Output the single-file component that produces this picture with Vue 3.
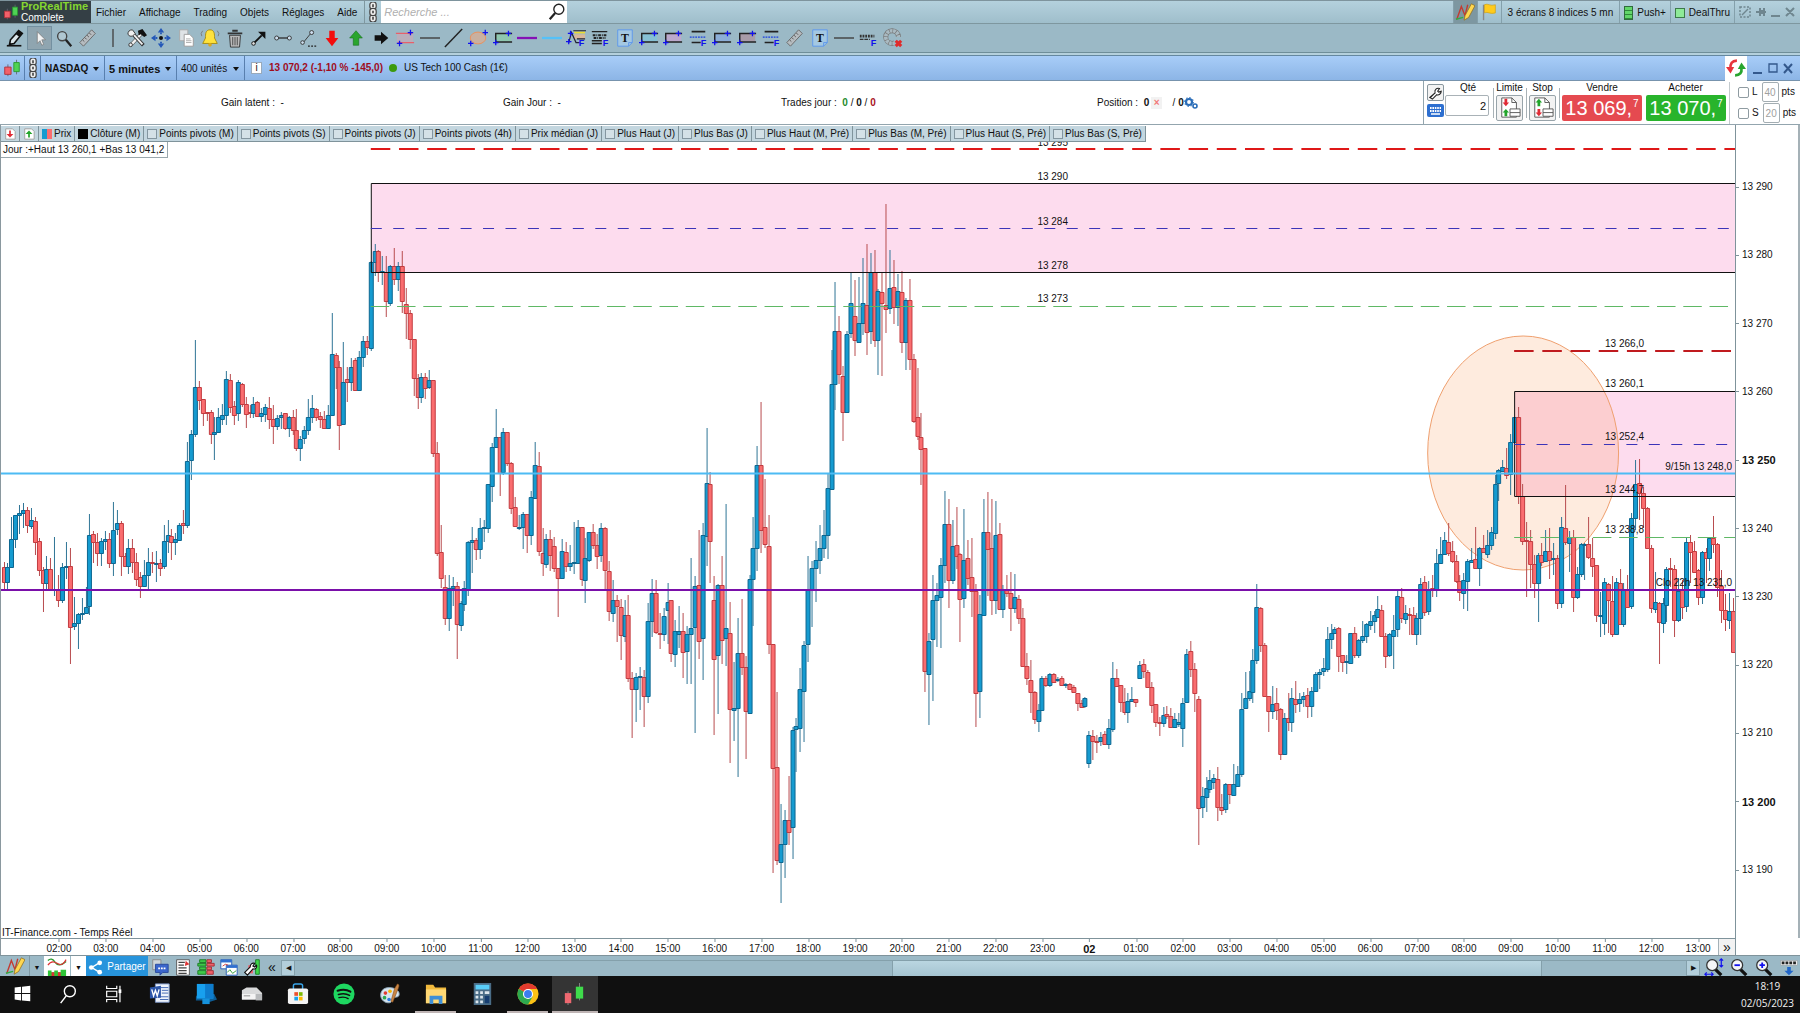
<template>
  <div class="desktop">
    <header class="menubar">
      <div class="brand">
        <svg class="ico" viewBox="0 0 22 22" v-html="icons.candles"></svg>
        <div><strong>ProRealTime</strong><span>Complete</span></div>
      </div>
      <nav class="menu">
        <a v-for="m in menus" :key="m" href="#">{{ m }}</a>
      </nav>
      <button class="chain" aria-label="Lier"><svg class="ico" viewBox="0 0 22 22" v-html="icons.chain"></svg></button>
      <div class="search">
        <input type="text" placeholder="Recherche ..." aria-label="Recherche">
        <svg class="ico" viewBox="0 0 22 22" v-html="icons.search"></svg>
      </div>
      <div class="menubar-right">
        <button class="cell active" aria-label="Dessin"><svg class="ico" viewBox="0 0 22 22" v-html="icons.draw"></svg></button>
        <button class="cell" aria-label="Drapeau"><svg class="ico" viewBox="0 0 22 22" v-html="icons.flag"></svg></button>
        <button class="cell wide">3 écrans 8 indices 5 mn</button>
        <button class="cell"><i class="push"></i>Push+</button>
        <button class="cell"><i class="deal"></i>DealThru</button>
        <button class="cell win dim" aria-label="Fenêtre"><svg viewBox="0 0 64 22" v-html="icons.winDim"></svg></button>
      </div>
    </header>

    <div class="toolbar">
      <div class="tools">
        <button v-for="(t, i) in tools" :key="i" :class="{ active: t === 'cursor' }" :aria-label="t">
          <svg class="ico" viewBox="0 0 22 22" v-html="icons[t]"></svg>
        </button>
      </div>
    </div>
    <div class="strip"></div>

    <div class="titlebar">
      <span class="tcell first"><svg class="ico" viewBox="0 0 22 22" v-html="icons.candles"></svg></span>
      <span class="tcell link"><svg class="ico" viewBox="0 0 22 22" v-html="icons.chain"></svg></span>
      <label class="tcell drop nasdaq"><select aria-label="Valeur"><option>NASDAQ</option></select></label>
      <label class="tcell drop minutes"><select aria-label="Unité de temps"><option>5 minutes</option></select></label>
      <label class="tcell drop units"><select aria-label="Historique"><option>400 unités</option></select></label>
      <span class="info">i</span>
      <strong class="quote">13 070,2 (-1,10 % -145,0)</strong>
      <i class="dot"></i>
      <span>US Tech 100 Cash (1€)</span>
      <span class="sync"><svg class="ico" viewBox="0 0 22 22" v-html="icons.sync"></svg></span>
      <button class="win" aria-label="Fenêtre"><svg viewBox="0 0 64 22" v-html="icons.win"></svg></button>
    </div>

    <section class="account">
      <div class="stats">
        <span>Gain latent :&nbsp; -</span>
        <span>Gain Jour :&nbsp; -</span>
        <span>Trades jour :&nbsp; <b class="green">0</b> / <b>0</b> / <b class="red">0</b></span>
        <span>Position :&nbsp; <b>0</b> <i class="cross">×</i> &nbsp; / <b>0</b><svg class="gears" viewBox="0 0 14 12" v-html="icons.gears"></svg></span>
      </div>
      <div class="order">
        <div class="side">
          <button aria-label="Réglages"><svg viewBox="0 0 17 17" v-html="icons.wrench"></svg></button>
          <button class="kb" aria-label="Clavier"><svg viewBox="0 0 17 13" v-html="icons.keyboard"></svg></button>
        </div>
        <div class="field">
          <label for="qty">Qté</label>
          <input id="qty" type="text" value="2">
        </div>
        <div class="field sep">
          <label for="limit">Limite</label>
          <button id="limit" class="doc"><svg viewBox="0 0 24 24" v-html="icons.limit"></svg></button>
        </div>
        <div class="field sep">
          <label for="stop">Stop</label>
          <button id="stop" class="doc"><svg viewBox="0 0 24 24" v-html="icons.stop"></svg></button>
        </div>
        <div class="field sep">
          <label for="sell">Vendre</label>
          <button id="sell" class="deal-btn sell">13 069,<sup>7</sup></button>
        </div>
        <div class="field">
          <label for="buy">Acheter</label>
          <button id="buy" class="deal-btn buy">13 070,<sup>7</sup></button>
        </div>
        <div class="auto">
          <div><label><input type="checkbox">L</label><label><input type="text" value="40">pts</label></div>
          <div><label><input type="checkbox">S</label><label><input type="text" value="20">pts</label></div>
        </div>
      </div>
    </section>

    <main class="chart">
      <div class="plot">
        <svg class="drawing" viewBox="1 125 1735 813" preserveAspectRatio="none">
          <rect x="371.5" y="183.5" width="1370" height="89" class="zone" />
          <rect x="1515.5" y="391.5" width="230" height="105" class="zone" />
          <ellipse cx="1524" cy="453" rx="95.5" ry="117" class="halo" />
          <g v-for="(c, i) in candles" :key="i" :class="c.up ? 'up' : 'down'">
            <path :d="`M${c.x} ${c.high}V${c.low}`" />
            <rect :x="c.x - 2" :y="c.top" width="4" :height="c.size" />
          </g>
          <rect x="371.5" y="183.5" width="1370" height="89" class="frame" />
          <rect x="1515.5" y="391.5" width="230" height="105" class="frame" />
          <path d="M371 149H1736" class="dash-red" />
          <path d="M371 228.500H1732" class="dash-blue" />
          <path d="M371 306.500H1732" class="dash-green" />
          <path d="M1515 351H1732" class="dash-red dark" />
          <path d="M1515 444.500H1732" class="dash-blue" />
          <path d="M1515 537.500H1736" class="dash-green" />
          <path d="M1 473.500H1736" class="open-line" />
          <path d="M1 590H1736" class="close-line" />
        </svg>
        <span v-for="l in levels" :key="l.text" class="level" :class="{ end: l.end }" :style="levelStyle(l)">{{ l.text }}</span>
        <div class="legend">
          <button aria-label="Réduire"><svg viewBox="0 0 14 14" v-html="icons.redDown"></svg></button>
          <button aria-label="Agrandir"><svg viewBox="0 0 14 14" v-html="icons.greenUp"></svg></button>
          <span class="item"><i class="duo"></i>Prix</span>
          <span class="item"><i class="black"></i>Clôture (M)</span>
          <label v-for="n in indicators" :key="n" class="item"><input type="checkbox">{{ n }}</label>
        </div>
        <div class="range">Jour :+Haut 13 260,1 +Bas 13 041,2</div>
        <div class="source">IT-Finance.com - Temps Réel</div>
      </div>
      <div class="prices">
        <span v-for="p in prices" :key="p.text" :class="{ bold: p.bold }" :style="{ top: p.top }">{{ p.text }}</span>
      </div>
    </main>

    <div class="times">
      <div class="times-inner">
        <span v-for="(t, i) in times" :key="i" :class="{ bold: t === '02' }" :style="{ left: timeLeft(i) }">{{ t }}</span>
        <button class="more">»</button>
      </div>
    </div>

    <footer class="bottombar">
      <button class="b-draw" aria-label="Dessin"><svg class="ico" viewBox="0 0 22 22" v-html="icons.draw"></svg></button>
      <button class="b-arrow">▼</button>
      <button class="b-chart" aria-label="Indicateurs"><svg class="ico" viewBox="0 0 22 22" v-html="icons.waves"></svg></button>
      <button class="b-arrow white">▼</button>
      <button class="share"><svg viewBox="0 0 16 16" v-html="icons.share"></svg>Partager</button>
      <button v-for="b in bottomTools" :key="b" class="b-tool" :aria-label="b"><svg class="ico" viewBox="0 0 22 22" v-html="icons[b]"></svg></button>
      <button class="b-fold">«</button>
      <button class="b-scroll">◀</button>
      <div class="track"><div class="thumb"></div></div>
      <button class="b-scroll">▶</button>
      <div class="zooms">
        <button v-for="b in zoomTools" :key="b" :aria-label="b"><svg class="ico" viewBox="0 0 22 22" v-html="icons[b]"></svg></button>
      </div>
    </footer>

    <div class="taskbar">
      <button v-for="a in apps" :key="a" :class="{ open: a === 'explorer' || a === 'chrome', current: a === 'candlesApp' }" :aria-label="a">
        <svg viewBox="0 0 24 24" v-html="icons[a]"></svg>
      </button>
      <div class="clock"><span>18:19</span><span>02/05/2023</span></div>
    </div>
  </div>
</template>

<script setup>
const menus = ['Fichier', 'Affichage', 'Trading', 'Objets', 'Réglages', 'Aide']

const tools = [
  'pen', 'cursor', 'lookup', 'ruler', 'bar', 'hammer', 'move', 'copy', 'bell', 'trash',
  'arrowNE', 'segment', 'halfLine', 'down', 'up', 'right', 'channel', 'hline', 'diag', 'oval',
  'rectGreen', 'violet', 'sky', 'fiboA', 'fiboB', 'text', 'rectSky', 'rectPink', 'fiboC', 'rectBlue',
  'rectMauve', 'fiboC', 'ruler', 'text', 'hline', 'fiboD', 'magnet'
]

const indicators = [
  'Points pivots (M)', 'Points pivots (S)', 'Points pivots (J)', 'Points pivots (4h)', 'Prix médian (J)',
  'Plus Haut (J)', 'Plus Bas (J)', 'Plus Haut (M, Pré)', 'Plus Bas (M, Pré)', 'Plus Haut (S, Pré)', 'Plus Bas (S, Pré)'
]

const bottomTools = ['chat', 'news', 'book', 'windows', 'wrenchCandle']
const zoomTools = ['zoomFit', 'zoomOut', 'zoomIn', 'gridDown']
const apps = ['start', 'find', 'taskview', 'word', 'tablet', 'drive', 'store', 'spotify', 'paint', 'explorer', 'calc', 'chrome', 'candlesApp']

// open close high low, one group per 5 minute bar, in chart units
const data = `
567 582 562 589,582 567 563 589,567 539 517 568,539 515 515 548,515 513 505 534,513 510 503 528,510 525 507 533,526 520 508 529,521 542 517 555,541 570 538 576,570 583 567 612,583 569 556 590,
569 590 558 590,590 589 537 596,590 600 575 607,600 567 563 603,567 566 542 579,566 627 548 664,626 623 597 630,623 614 613 649,614 613 598 620,613 607 587 614,606 535 514 615,534 542 531 563,
542 553 533 566,553 541 538 566,541 539 531 550,539 563 533 568,563 530 502 576,529 523 510 535,523 556 521 576,556 566 553 567,566 548 539 574,548 562 539 573,562 579 553 586,577 586 572 598,
586 575 560 587,575 562 548 589,562 563 552 573,564 563 551 582,563 568 559 576,566 541 525 569,541 535 520 553,536 542 529 560,542 539 533 555,540 525 523 540,523 525 510 534,525 461 442 528,
460 434 430 480,434 387 340 437,387 400 381 410,399 413 399 426,412 413 412 421,412 434 410 444,434 432 417 460,432 417 408 432,419 415 404 425,415 379 371 425,380 407 374 413,406 415 401 425,
413 382 380 421,384 404 383 407,404 414 397 428,412 413 405 418,413 404 397 418,402 416 401 416,416 413 408 422,414 407 404 422,408 419 397 429,419 426 405 444,426 418 415 430,417 415 412 429,
413 428 413 430,428 417 416 437,417 430 410 435,430 448 409 451,448 439 436 461,438 430 426 444,430 417 399 435,417 408 395 423,409 417 408 421,416 419 412 428,419 428 411 428,428 415 405 429,
415 354 313 416,355 367 353 389,367 425 361 450,424 382 342 424,379 382 367 402,382 367 358 391,360 390 358 391,390 357 351 391,357 341 336 367,341 347 336 355,348 262 261 351,262 251 244 276,
251 272 250 282,272 271 256 285,272 301 256 317,303 266 265 306,266 279 248 285,279 266 262 291,266 301 251 313,304 313 288 339,313 339 310 349,339 378 339 396,378 397 374 409,397 377 373 403,
377 388 373 399,387 380 370 389,380 453 380 457,453 553 442 556,552 578 525 588,587 618 575 625,618 588 575 631,588 586 577 606,586 624 582 659,625 603 601 631,604 588 581 611,590 542 541 596,
542 540 527 573,540 549 538 560,549 528 518 559,528 527 520 542,528 484 484 533,486 447 443 502,447 437 409 448,437 473 437 496,472 432 428 475,432 463 432 466,463 508 462 514,507 526 497 527,
528 527 515 530,527 514 512 549,514 535 514 553,535 497 491 545,498 465 442 498,466 551 452 556,553 563 528 576,564 539 534 568,539 555 530 571,546 568 537 572,568 578 568 617,578 551 539 579,
552 566 542 572,566 563 545 571,563 562 522 574,563 527 520 564,527 579 527 586,580 558 538 603,560 532 532 562,532 545 524 549,545 556 534 569,555 528 523 562,528 570 527 590,571 611 561 621,
613 600 580 622,600 606 595 642,607 635 599 660,636 615 600 642,615 678 595 682,678 689 672 738,689 677 673 722,677 676 667 710,677 696 670 727,696 621 603 703,621 593 579 637,593 632 580 634,
633 634 613 649,634 616 608 641,610 602 583 644,600 653 600 662,654 631 620 667,634 631 606 648,631 652 613 678,651 634 626 684,634 628 558 684,627 586 576 733,585 641 530 659,638 535 523 680,
536 483 428 566,484 541 472 583,600 659 576 735,655 585 584 714,585 640 556 664,638 628 504 666,633 709 602 763,710 708 662 741,708 653 618 777,653 667 599 675,667 711 656 759,713 579 575 714,
579 548 517 626,548 465 446 571,465 530 402 553,527 544 479 548,546 644 515 654,644 768 644 873,767 860 692 865,862 844 804 903,844 820 810 878,820 832 776 845,827 730 727 859,729 726 718 772,
728 689 668 752,691 645 641 742,644 589 556 662,589 568 561 627,568 560 541 602,560 548 525 574,548 535 510 558,535 488 474 559,489 384 350 490,384 331 282 410,331 374 316 384,376 412 366 441,
412 334 331 413,333 303 273 338,316 340 280 356,342 323 277 343,323 303 258 335,305 332 244 355,331 272 253 344,272 340 250 347,340 291 289 375,292 303 272 376,305 309 204 333,308 288 250 314,
287 307 260 324,307 291 274 326,292 342 271 353,342 300 298 370,300 359 279 370,359 421 354 423,417 436 368 440,437 449 413 485,448 671 448 692,674 641 633 725,639 600 575 701,600 595 583 647,
597 565 558 648,565 524 491 583,524 580 499 608,580 546 520 584,545 556 507 569,554 599 553 642,598 560 509 608,558 578 540 585,577 591 538 617,591 693 584 727,691 614 595 718,615 532 499 616,
532 549 492 596,548 600 499 615,600 535 501 614,534 609 523 610,609 590 585 618,590 593 575 597,593 608 572 631,608 597 574 613,599 618 595 624,618 666 608 667,666 678 653 685,680 692 660 713,
692 719 691 724,721 710 704 732,710 678 676 711,678 685 676 687,685 674 673 687,674 682 673 682,680 679 677 682,678 685 676 686,685 684 683 688,684 689 683 690,687 692 685 693,693 703 693 711,
703 707 700 707,706 698 697 708,763 735 731 768,736 741 730 760,741 742 735 753,741 737 732 746,734 744 731 745,744 728 719 749,729 678 662 732,678 686 669 686,685 702 685 712,702 712 688 715,
712 701 693 723,701 699 687 701,699 702 699 707,678 665 661 679,664 671 659 678,672 687 670 688,687 705 682 713,704 722 704 727,722 723 717 736,723 715 707 727,714 716 706 719,716 727 708 727,
727 719 713 728,724 722 713 727,728 703 698 747,702 654 649 702,651 669 641 677,669 693 663 712,699 808 696 845,807 796 787 818,797 788 777 812,789 780 770 793,782 778 774 789,779 807 767 821,
807 810 794 815,809 784 783 813,784 794 784 804,795 784 764 795,786 774 766 787,774 709 693 777,708 698 672 709,698 691 671 701,692 660 649 703,660 607 584 664,608 645 607 652,645 696 643 697,
696 711 696 732,711 704 686 719,703 710 688 720,709 754 708 760,754 718 713 755,718 722 693 731,722 698 688 732,699 704 681 713,703 699 693 712,699 696 692 707,695 706 688 718,706 691 687 717,
691 674 672 692,674 672 669 689,671 668 658 676,669 639 627 672,639 633 624 649,633 629 627 634,628 656 627 672,655 662 655 672,662 661 655 674,663 633 633 664,633 655 627 658,655 640 639 658,
640 636 621 643,636 624 623 643,625 621 611 630,621 615 611 633,617 609 596 617,610 636 605 637,636 656 633 668,655 634 633 657,636 630 615 669,629 596 591 637,597 618 588 623,619 613 605 624,
614 615 608 635,615 634 607 635,634 618 613 645,618 584 578 635,582 612 576 616,611 589 581 615,588 589 575 597,589 563 549 597,563 554 537 564,554 540 532 555,542 553 523 556,551 561 541 563,
561 581 555 583,581 592 575 601,593 580 573 609,581 561 559 611,562 560 548 563,559 568 527 569,568 548 547 586,548 552 535 553,554 545 530 558,545 532 527 550,533 484 475 539,483 470 469 501,
471 467 460 471,468 475 448 479,474 442 434 495,442 417 417 443,417 496 407 504,496 541 484 545,540 541 522 597,541 564 530 588,564 583 555 598,583 555 553 622,555 562 543 566,561 551 530 562,
551 560 528 579,559 558 543 575,558 603 555 609,603 527 517 608,528 542 485 545,543 537 531 572,537 597 530 612,597 574 567 599,574 544 543 577,545 544 543 580,544 557 517 559,558 566 538 577,
565 615 565 622,616 615 592 637,623 582 578 635,584 600 583 633,601 634 576 637,634 582 578 634,583 624 569 625,624 590 583 627,590 607 575 607,606 518 513 609,518 484 460 530,483 493 459 520,
493 508 487 528,508 548 507 549,548 608 545 613,609 602 572 613,603 622 602 664,623 603 598 633,605 569 567 622,568 569 558 587,569 620 565 637,620 591 578 622,590 607 580 619,606 542 537 612,
542 552 535 583,551 572 541 573,570 597 569 605,597 552 551 604,552 558 548 583,558 538 537 571,538 544 516 553,544 587 543 597,586 610 570 623,610 619 594 631,620 611 593 629,611 652 598 653`

const candles = data.trim().split(',').map((row, i) => {
  const [open, close, high, low] = row.trim().split(' ').map(Number)
  return {
    x: Math.floor(4 + i * 3.906) + 0.5,
    high,
    low,
    top: Math.min(open, close) + 0.5,
    size: Math.max(Math.abs(open - close), 1),
    up: close < open
  }
})

const topOf = (y) => ((y - 125) / 813) * 100 + '%'

const levels = [
  { text: '13 295', x: 1038, y: 143 },
  { text: '13 290', x: 1038, y: 177 },
  { text: '13 284', x: 1038, y: 222 },
  { text: '13 278', x: 1038, y: 266 },
  { text: '13 273', x: 1038, y: 299 },
  { text: '13 266,0', x: 1606, y: 344 },
  { text: '13 260,1', x: 1606, y: 384 },
  { text: '13 252,4', x: 1606, y: 437 },
  { text: '9/15h 13 248,0', y: 467, end: true },
  { text: '13 244,7', x: 1606, y: 490 },
  { text: '13 238,8', x: 1606, y: 530 },
  { text: 'Clo 22h 13 231,0', y: 583, end: true }
]
const levelStyle = (l) => (l.end ? { top: topOf(l.y) } : { top: topOf(l.y), left: ((l.x - 1) / 1735) * 100 + '%' })

const prices = Array.from({ length: 11 }, (_, i) => {
  const value = 290 - i * 10
  return { text: '13 ' + value, top: topOf(187 + i * 68.3), bold: value % 50 === 0 }
})

const two = (n) => String(n).padStart(2, '0')
const times = [
  ...Array.from({ length: 22 }, (_, i) => two(i + 2) + ':00'),
  '02',
  ...Array.from({ length: 13 }, (_, i) => two(i + 1) + ':00')
]
const timeLeft = (i) => ((58 + i * 46.86) / 1735) * 100 + '%'

// small builders for the icons that come in several colours
const plus = (x, y) => `<path d="M${x - 3} ${y}h6M${x} ${y - 3}v6" stroke="#11e" stroke-width="1.400"/>`
const rectTool = (fill) => `<path d="M3 6h17v9H3z" fill="${fill}"/><path d="M21 6H3v10M3 15.500h18" fill="none" stroke="#222" stroke-width="1.600"/>${plus(17, 6)}${plus(3, 16)}`
const letterF = '<text x="14" y="20" font-size="10" font-weight="bold" font-family="Liberation Sans, sans-serif" fill="#11e">F</text>'
const lens = (inner) => `<path d="M12 13l7 7" stroke="#111" stroke-width="3.500"/><circle cx="9" cy="9" r="6" fill="#f4f6f8" stroke="#333" stroke-width="1.400"/>${inner}`

const icons = {
  candles: '<path d="M6.500 7v13M16 2v16" stroke="#667"/><path d="M3 10h7v8H3z" fill="#f2606a" stroke="#b03038"/><path d="M13 5h6v10h-6z" fill="#4fd354" stroke="#2a9a30"/>',
  chain: '<g fill="#eee" stroke="#444" stroke-width="1.300"><rect x="7.500" y="0" width="7" height="8" rx="3"/><rect x="7.500" y="14" width="7" height="8" rx="3"/><rect x="7.500" y="7" width="7" height="8" rx="3"/></g><g fill="#555"><path d="M10 2.500h2v3h-2zM10 9.500h2v3h-2zM10 16.500h2v3h-2z"/></g>',
  search: '<circle cx="13" cy="8" r="5.500" fill="#fff" fill-opacity=".4" stroke="#222" stroke-width="1.500"/><path d="M9 12l-6 7" stroke="#222" stroke-width="2.500"/>',
  lookup: '<circle cx="9" cy="9" r="5" fill="#fff" fill-opacity=".2" stroke="#444" stroke-width="1.500"/><path d="M13 13l6 7" stroke="#222" stroke-width="2.500"/>',
  draw: '<path d="M2 19l5-14 4 10 3-12" fill="none" stroke="#c33a30" stroke-width="1.500"/><path d="M1 19l8-2" stroke="#3a4" stroke-width="1.500"/><path d="M18 2l4 2-7 13-5 3 1-5z" fill="#ffd750" stroke="#8a6a20" stroke-width=".8"/>',
  flag: '<path d="M5 3v17" stroke="#888" stroke-width="1.500"/><path d="M6 3c4-2 6 2 12 0v9c-6 2-8-2-12 0z" fill="#ffcb1c" stroke="#c89500" stroke-width=".6"/>',
  winDim: '<g fill="none" stroke="#6f868f" stroke-width="1.500"><rect x="4" y="6" width="10" height="10" stroke-dasharray="2 1.500"/><path d="M6 14l6-6"/><path d="M20 11h4M24 7v8M28 7v8M24 10h4v2h-4M28 11h2M35 15h9M50 7l8 8M58 7l-8 8" stroke-width="2"/></g>',
  win: '<g fill="none" stroke="#33588c" stroke-width="2"><path d="M3 16h9M34 7l8 9M42 7l-8 9"/><path d="M19 7h8v8h-8z" stroke-width="1.300"/></g>',
  pen: '<path d="M15 3l4 3-9 11-5 1 1-5z" fill="#dce6ea" stroke="#111" stroke-width="1.800"/><path d="M15 3l4 3-3 4-4-3z" fill="#111"/><path d="M2 19.500h16" stroke="#111" stroke-width="1.800"/>',
  cursor: '<path d="M8 4v13l3-3 2 5 2-1-2-5h4z" fill="#f3f3f3" stroke="#777" stroke-width=".8"/>',
  ruler: '<path d="M2 16L15 2l4 4L6 20z" fill="#b6bcc0" stroke="#666"/><path d="M5 13l2 2M7.500 10.500l2 2M10 8l2 2M12.500 5.500l2 2" stroke="#555"/>',
  bar: '<path d="M11 1v20" stroke="#444" stroke-width="1.500"/>',
  hammer: '<path d="M5 18L16 6" stroke="#555" stroke-width="4"/><path d="M5 18L16 6" stroke="#f2f2f2" stroke-width="2.600"/><path d="M6 6l12 13" stroke="#333" stroke-width="4"/><path d="M7 7l10 11" stroke="#f2f2f2" stroke-width="2"/><path d="M1 7q0-5 5-5l3 4-3 3q-3 1-5-2z" fill="#f0f0f0" stroke="#333"/><path d="M12 3l5-2 5 7-3 2-4-3-2 1z" fill="#111"/><circle cx="4" cy="18.500" r="2" fill="#eee" stroke="#333"/>',
  move: '<g fill="#2458b8"><path d="M11 0l3.500 5h-7zM11 22l3.500-5h-7zM0 11l5-3.500v7zM22 11l-5-3.500v7z"/><circle cx="11" cy="11" r="2.200" fill="#111"/><path d="M10 5h2v2h-2zM10 15h2v2h-2zM5 10h2v2H5zM15 10h2v2h-2z"/></g>',
  copy: '<path d="M4 2h9v12H4z" fill="#dfe3e6" stroke="#aaa"/><path d="M9 7h6l4 4v9H9z" fill="#fff" stroke="#999"/><path d="M11 12h5M11 14h6M11 16h6" stroke="#aaa"/>',
  bell: '<path d="M11 2c-5 0-5 5-5 9l-3 6h16l-3-6c0-4 0-9-5-9z" fill="#ffe23c" stroke="#a58a10"/><circle cx="11" cy="18.500" r="2" fill="#d8a820"/><path d="M3 3q-3 3-1 6M19 3q3 3 1 6" fill="none" stroke="#777"/>',
  trash: '<path d="M5 8h12l-1 13H6z" fill="#bbb" stroke="#333"/><path d="M3 6h16M8 3h6" stroke="#333" stroke-width="2"/><path d="M8.500 10v9M11 10v9M13.500 10v9" stroke="#444"/>',
  arrowNE: '<path d="M6 16l8-8" stroke="#111" stroke-width="2"/><path d="M10 4h8v8z" fill="#111"/><circle cx="5" cy="17" r="2" fill="#ddd" stroke="#111"/>',
  segment: '<path d="M4 11h14" stroke="#333" stroke-width="1.500"/><circle cx="4" cy="11" r="2.200" fill="#cde" stroke="#333"/><circle cx="18" cy="11" r="2.200" fill="#cde" stroke="#333"/>',
  halfLine: '<path d="M5 17l9-11" stroke="#333"/><circle cx="15" cy="5" r="2.200" fill="#cde" stroke="#333"/><circle cx="5" cy="16" r="2" fill="#cde" stroke="#333"/><path d="M11 20h10" stroke="#222" stroke-width="1.500" stroke-dasharray="2 1.500"/>',
  down: '<path d="M8 3h6v8h4l-7 9-7-9h4z" fill="#f30d0d"/>',
  up: '<path d="M8 19h6v-8h4l-7-8-7 8h4z" fill="#2aa52e" stroke="#136b18" stroke-width=".6"/>',
  right: '<path d="M4 8h7V4l8 7-8 7v-4H4z" fill="#111"/>',
  channel: '<path d="M2 6h18v10H2z" fill="#c7a9b6" fill-opacity=".7"/><path d="M1 6h18M3 16h18" stroke="#e8606a" stroke-width="1.300"/>' + plus(17, 5) + plus(5, 17),
  hline: '<path d="M0 11h22" stroke="#444" stroke-width="1.600"/>',
  diag: '<path d="M1 21L20 1" stroke="#222" stroke-width="1.600"/>',
  oval: '<ellipse cx="11" cy="11" rx="8.500" ry="6.500" fill="#c9b0a0" stroke="#ee8d55"/>' + plus(19, 5) + plus(3, 17),
  rectGreen: rectTool('#8fc7b0'),
  rectSky: rectTool('#86c0d4'),
  rectPink: rectTool('#bba9cc'),
  rectBlue: rectTool('#8caed8'),
  rectMauve: rectTool('#a89ba8'),
  violet: '<path d="M0 11h22" stroke="#8412b5" stroke-width="2.500"/>',
  sky: '<path d="M0 11h22" stroke="#55c1f8" stroke-width="2.500"/>',
  fiboA: '<path d="M9 7h12v5H9z" fill="#d9b79a"/><path d="M9 5h12" stroke="#eedc30" stroke-width="2"/><path d="M3 16L6 5l5 11h4M8 3h14M12 12h9" fill="none" stroke="#223" stroke-width="1.300"/>' + plus(3, 15) + plus(5, 6) + letterF,
  fiboB: '<path d="M2 4h17M2 14h11M2 17h11" stroke="#222" stroke-width="1.500"/><path d="M3 8h15M4 11h13" stroke="#222" stroke-width="2" stroke-dasharray="3 1 1 1"/>' + letterF,
  fiboC: '<path d="M4 4h15M4 16h10" stroke="#222" stroke-width="1.800"/><path d="M2 10h17" stroke="#1a3ee0" stroke-width="1.500" stroke-dasharray="2 1"/>' + letterF,
  fiboD: '<path d="M2 9h16" stroke="#333" stroke-width="3" stroke-dasharray="2 1"/><path d="M2 12.500h11" stroke="#333" stroke-width="1.500" stroke-dasharray="4 1"/>' + letterF,
  text: '<path d="M3 2h16v14l-4 4H3z" fill="#a4c8e2" stroke="#5a96ec"/><path d="M19 16h-4v4" fill="none" stroke="#5a96ec"/><text x="11" y="15.500" text-anchor="middle" font-size="13" font-weight="bold" font-family="Liberation Serif, serif" fill="#111">T</text>',
  magnet: '<circle cx="10" cy="10" r="7" fill="none" stroke="#777" stroke-width="5.500"/><circle cx="10" cy="10" r="7" fill="none" stroke="#a9bac2" stroke-width="4" stroke-dasharray="3 .7"/><path d="M11 10l10 0v11h-8z" fill="#9bb9c6"/><path d="M14 14l6 6M20 14l-6 6" stroke="#e02b2b" stroke-width="3.400"/>',
  sync: '<path d="M12 3Q4 3 5 12" fill="none" stroke="#e8333c" stroke-width="3"/><path d="M0 10h9l-4 7z" fill="#e8333c"/><path d="M10 19q8 0 7-8" fill="none" stroke="#27a52e" stroke-width="3"/><path d="M13 12h9l-5-7z" fill="#27a52e"/>',
  gears: '<circle cx="5" cy="5" r="3" fill="none" stroke="#2a6db8" stroke-width="2.200"/><circle cx="5" cy="5" r="4.500" fill="none" stroke="#2a6db8" stroke-dasharray="1.500 2"/><circle cx="11" cy="9" r="2" fill="none" stroke="#2a6db8" stroke-width="1.600"/>',
  wrench: '<path d="M3 14l5-5M8 9c-1-4 2-6 5-5l-2 3 1 1 3-1c0 3-3 5-5 4l-5 5-3-2z" fill="#fff" stroke="#222" stroke-width="1.200"/>',
  keyboard: '<rect width="17" height="13" rx="2" fill="#2d6fd0"/><path d="M3 4h11M3 7h11" stroke="#fff" stroke-width="1.800" stroke-dasharray="1.600 .8"/><path d="M4 10h9" stroke="#fff" stroke-width="1.500"/>',
  limit: '<path d="M7 1h7l5 5v16H3V1z" fill="#fff" stroke="#555"/><path d="M14 1v5h5" fill="none" stroke="#555"/><path d="M6 2h3v4h2l-3.500 4L4 6h2z" fill="#e02b35"/><path d="M6 21h3v-4h2l-3.500-4L4 17h2z" fill="#23a52b"/><path d="M12 13h11v8H12zM12 17h11" fill="#fff" stroke="#555"/>',
  stop: '<path d="M7 1h7l5 5v16H3V1z" fill="#fff" stroke="#555"/><path d="M14 1v5h5" fill="none" stroke="#555"/><path d="M6 10h3V6h2L7.500 2 4 6h2z" fill="#23a52b"/><path d="M6 13h3v4h2l-3.500 4L4 17h2z" fill="#e02b35"/><path d="M12 13h11v8H12zM12 17h11" fill="#fff" stroke="#555"/>',
  redDown: '<path d="M2 1h8l3 3v9H2z" fill="#fff" stroke="#999"/><path d="M6 3h2v4h3l-4 4-4-4h3z" fill="#e02b35"/>',
  greenUp: '<path d="M2 1h8l3 3v9H2z" fill="#fff" stroke="#999"/><path d="M6 11h2V7h3L7 3 3 7h3z" fill="#23a52b"/>',
  waves: '<path d="M1 5q4-4 8 2t12-1" fill="none" stroke="#2a9a30" stroke-width="1.500"/><path d="M1 10q4-6 10-2t10-4" fill="none" stroke="#d33" stroke-width="1.300"/><path d="M1 16h4v2h3v-2h4v2h3v-3h6v7H1z" fill="#2fc437"/><path d="M5 18h3v4H5zM12 18h3v4h-3z" fill="#d33"/>',
  share: '<path d="M12 3L4 8l8 5" fill="none" stroke="#fff" stroke-width="1.500"/><g fill="#fff"><circle cx="12.500" cy="3" r="2.500"/><circle cx="3.500" cy="8" r="2.500"/><circle cx="12.500" cy="13" r="2.500"/></g>',
  chat: '<path d="M3 3h9v11H3z" fill="#cfd6da" stroke="#888"/><path d="M6 8h14v9h-6l-3 3v-3H6z" fill="#3a66cc" stroke="#27489a"/><path d="M9 12.500h9" stroke="#fff" stroke-width="2" stroke-dasharray="2 1"/>',
  news: '<path d="M4 3h14v17H4z" fill="#fff" stroke="#555"/><path d="M6 6h7M6 9h6M6 12h9M6 15h9M6 18h9" stroke="#444" stroke-width="1.300"/><path d="M14 4l4 4-5 2z" fill="#d33"/>',
  book: '<g fill="#3fc949" stroke="#1c7a24"><path d="M4 3h7v3H4zM2 7h9v3H2zM4 11h7v3H4zM2 15h9v4H2z"/></g><g fill="#f0606a" stroke="#a02c34"><path d="M12 3h5v3h-5zM12 7h8v3h-8zM12 11h5v3h-5zM12 15h7v4h-7z"/></g>',
  windows: '<path d="M2 3h12v10H2z" fill="#fff" stroke="#235ab5"/><path d="M2 3h12v3H2z" fill="#2f6fd0"/><path d="M8 9h12v11H8z" fill="#fff" stroke="#235ab5"/><path d="M8 9h12v3H8z" fill="#2f6fd0"/><path d="M9 17l3-3 3 4 4-3" fill="none" stroke="#2a9a30"/><path d="M4 10l3-2 3 1" fill="none" stroke="#c33"/>',
  wrenchCandle: '<path d="M7 9h5v9H7z" fill="#f0606a"/><path d="M15 3h4v16h-4z" fill="#3fd949" stroke="#1c7a24"/><path d="M3 17l6-6c0-3 2-5 5-4l-2 3 2 1 2-2c1 3-2 5-4 4l-6 7z" fill="#fff" stroke="#111" stroke-width="1.200"/>',
  zoomFit: lens('<path d="M19 2v9M17 4l2-2 2 2M17 9l2 2 2-2M1 19h9M3 17l-2 2 2 2M8 17l2 2-2 2" fill="none" stroke="#11e" stroke-width="1.300"/>'),
  zoomOut: lens('<path d="M6 9h6" stroke="#11e" stroke-width="2"/>'),
  zoomIn: lens('<path d="M6 9h6M9 6v6" stroke="#11e" stroke-width="2"/>'),
  gridDown: '<rect x="2" y="4" width="18" height="5" fill="#eee" stroke="#999" stroke-width=".5"/><path d="M3 6.500h16" stroke="#222" stroke-width="3" stroke-dasharray="3 1.200"/><path d="M9 11h4v4h3l-5 5-5-5h3z" fill="#2065c8"/>',
  start: '<g fill="#fff"><path d="M4 5l7-1v7H4zM12 4l9-1v8h-9zM4 12h7v7l-7-1zM12 12h9v8l-9-1z"/></g>',
  find: '<circle cx="14" cy="9" r="6" fill="none" stroke="#fff" stroke-width="1.500"/><path d="M10 14l-6 8" stroke="#fff" stroke-width="1.600"/>',
  taskview: '<g fill="none" stroke="#fff" stroke-width="1.300"><path d="M4 3v3h11V3M4 21v-3h11v3M4 9h11v6H4zM18.500 3v18"/></g><path d="M17 7h3v4h-3z" fill="#fff"/>',
  word: '<path d="M7 1h15v20H7z" fill="#eef3fa" stroke="#7c96c8"/><path d="M13 5h8M14 8h7M14 11h7M12 15h9M12 18h9" stroke="#3a62b0"/><path d="M1 5l12-2v13L1 17z" fill="#2d56a8"/><path d="M3 7l2 7 2-6 2 6 2-7" fill="none" stroke="#fff" stroke-width="1.500"/>',
  tablet: '<path d="M1 15l2-3h18l3 6-9 3-1-2H1z" fill="#0d5d96"/><path d="M2 1h18v16H2z" fill="#18a0ee"/><path d="M11 1h9v16h-9z" fill="#0e7ccd"/><path d="M8 17h8v6H8z" fill="#1592dd"/>',
  drive: '<path d="M1 8l5-3h11l6 6v7H1z" fill="#d9dadb"/><path d="M1 12h15v6H1z" fill="#f4f4f4"/><path d="M16 12h7v7h-7z" fill="#b8babc"/><path d="M3 14h7" stroke="#888"/>',
  store: '<path d="M7 7V3q0-2 2-2h6q2 0 2 2v4" fill="none" stroke="#3aa6ea" stroke-width="1.600"/><rect x="1" y="6" width="22" height="17" rx="2" fill="#f4f4f4"/><path d="M8 10h4v4H8z" fill="#f0502a"/><path d="M13 10h4v4h-4z" fill="#7dba00"/><path d="M8 15h4v4H8z" fill="#1aa2ec"/><path d="M13 15h4v4h-4z" fill="#fdb900"/>',
  spotify: '<circle cx="12" cy="12" r="11.500" fill="#1ed760"/><g fill="none" stroke="#111" stroke-linecap="round"><path d="M5 8.500q8-2.500 14 1" stroke-width="2.200"/><path d="M6 12.500q7-2 12 1" stroke-width="1.800"/><path d="M6.500 16q6-1.500 10 1" stroke-width="1.500"/></g>',
  paint: '<path d="M11 5C4 5 1 10 2 15s7 8 11 6c3-2 0-4 3-5s6 0 6-4-5-7-11-7z" fill="#d6e4ef" stroke="#8ba4b6"/><circle cx="7" cy="11" r="2" fill="#e03c31"/><circle cx="12" cy="9" r="2" fill="#f7b500"/><circle cx="6" cy="16" r="2" fill="#2fa84f"/><circle cx="11" cy="18" r="2" fill="#2a7de1"/><path d="M20 1q3 0 1 5l-6 15-2-1 4-14z" fill="#c98544" stroke="#7c4a1c" stroke-width=".6"/>',
  explorer: '<path d="M1 2h8l2 3h12v17H1z" fill="#f0b93c"/><path d="M1 7h22v15H1z" fill="#ffd874"/><path d="M5 23v-9h14v9h-4v-5H9v5z" fill="#3f8fd6"/>',
  calc: '<rect x="3" y="0" width="19" height="24" fill="#4a6c86"/><path d="M5 2h15v5H5z" fill="#59cdf8"/><g fill="#dde6ec"><path d="M5 9h3v3H5zM10 9h3v3h-3zM5 14h3v3H5zM10 14h3v3h-3zM5 19h3v3H5zM10 19h3v3h-3zM15 9h5v3h-5z"/></g><path d="M15 14h5v8h-5z" fill="#173e70"/>',
  chrome: '<circle cx="12" cy="12" r="11.500" fill="#fbc116"/><path d="M12 12L2 6.300A11.500 11.500 0 0 0 12 23.500l5-8.500z" fill="#2da94f"/><path d="M12 12L2 6.300A11.500 11.500 0 0 1 22 6.500H12z" fill="#e33b2e"/><circle cx="12" cy="12" r="5.500" fill="#fff"/><circle cx="12" cy="12" r="4.300" fill="#3b7ded"/>',
  candlesApp: '<path d="M5.500 9v15M18 0v19" stroke="#888"/><path d="M2 11h7v11H2z" fill="#ee6870"/><path d="M14 4h8v13h-8z" fill="#3fdb4b"/>'
}
</script>

<style>
  body{
    background: #fff;
  }
</style>

<style scoped>
  .desktop{
    display: flex;
    flex-direction: column;
    height: 100vh;
    overflow: hidden;
    font-family: "Liberation Sans", Arial, sans-serif;
    font-size: 10px;
    line-height: 12px;
    color: #111;
    background: #fff;
  }

  .desktop *{
    box-sizing: border-box;
  }

  button, input, select{
    font: inherit;
    color: inherit;
    margin: 0;
    padding: 0;
    border: 0;
    background: none;
    outline: none;
  }

  button{
    display: flex;
    align-items: center;
    justify-content: center;
  }

  .ico{
    width: 20px;
    height: 20px;
    flex: none;
    display: block;
  }

  /* menu */
  .menubar{
    flex: none;
    display: flex;
    height: 24px;
    border-top: 1px solid #7e949d;
    border-bottom: 1px solid #7e979f;
    background: linear-gradient(#b4d1dd, #9fbecb);
  }

  .brand{
    display: flex;
    align-items: center;
    gap: 1px;
    width: 91px;
    padding-left: 2px;
    background: #343f45;
    color: #fff;
    line-height: 11px;
  }

  .brand div{
    display: flex;
    flex-direction: column;
  }

  .brand strong{
    color: #84d730;
    font-size: 11px;
  }

  .brand .ico{
    width: 18px;
  }

  .menu{
    display: flex;
    align-items: center;
    gap: 13px;
    padding: 2px 7px 0 5px;
  }

  .menu a{
    color: #111;
    text-decoration: none;
  }

  .chain{
    width: 17px;
    border-left: 1px solid #7e979f;
  }

  .search{
    display: flex;
    align-items: center;
    width: 186px;
    background: #fff;
  }

  .search input{
    flex: 1;
    min-width: 0;
    padding-left: 3px;
    font-style: italic;
    font-size: 11px;
  }

  .search input::placeholder{
    color: #b0b0b0;
  }

  .menubar-right{
    display: flex;
    margin-left: auto;
  }

  .cell{
    gap: 4px;
    padding: 2px 4px 0;
    border-left: 1px solid #84a0ab;
    white-space: nowrap;
  }

  .cell:nth-child(-n+2){
    width: 24px;
    padding: 0;
  }

  .cell.active{
    background: #7d97a1;
  }

  .cell.wide{
    padding: 2px 6px 0;
  }

  .push{
    width: 9px;
    height: 14px;
    border: 1px solid #2f6d3c;
    background: repeating-linear-gradient(#62d76a 0 3px, #2f8a3c 3px 4px);
  }

  .deal{
    width: 10px;
    height: 10px;
    border: 1px solid #3d7a4a;
    background: #8eea98;
  }

  .win{
    width: 66px;
    padding: 0;
  }

  .win svg{
    width: 64px;
    height: 22px;
  }

  /* drawing tools */
  .toolbar{
    flex: none;
    height: 29px;
    padding-left: 3px;
    background: #9bb9c6;
    border-bottom: 1px solid #6f8e99;
  }

  .tools{
    display: grid;
    grid-template-columns: repeat(37, 1fr);
    width: 902px;
    height: 28px;
  }

  .tools button.active{
    margin: 2px 0;
    border: 1px solid #7390a0;
    background: #8fa5b0;
  }

  .strip{
    flex: none;
    height: 3px;
    background: #b4d0dc;
    border-bottom: 1px solid #6588a0;
  }

  /* window title */
  .titlebar{
    flex: none;
    display: flex;
    align-items: center;
    height: 25px;
    background: linear-gradient(#a8cdf8, #8cb5e6);
    border-bottom: 1px solid #7793ad;
  }

  .tcell{
    display: flex;
    align-items: center;
    justify-content: center;
    height: 24px;
    border-right: 1px solid #587fae;
  }

  .first{
    width: 25px;
  }

  .link{
    width: 16px;
  }

  .drop{
    position: relative;
  }

  .drop::after{
    content: "";
    position: absolute;
    right: 5px;
    top: 11px;
    border: 3px solid transparent;
    border-top: 4px solid #111;
    border-bottom: 0;
  }

  .drop select{
    appearance: none;
    width: 100%;
    height: 24px;
    padding: 1px 0 0 4px;
    font-weight: bold;
  }

  .nasdaq{
    width: 64px;
  }

  .minutes{
    width: 72px;
    font-size: 11px;
  }

  .units{
    width: 68px;
  }

  .units select{
    font-weight: normal;
  }

  .info{
    width: 11px;
    margin: 0 7px 0 6px;
    background: #fff;
    border: 1px solid #9ab;
    text-align: center;
    line-height: 10px;
  }

  .quote{
    color: #a00d1c;
  }

  .dot{
    width: 8px;
    height: 8px;
    margin: 0 7px 0 6px;
    border-radius: 50%;
    background: #3c9a0e;
  }

  .sync{
    display: flex;
    align-items: center;
    justify-content: center;
    width: 22px;
    height: 25px;
    margin-left: auto;
    background: #fff;
  }

  .titlebar .win{
    width: 53px;
    padding-left: 3px;
    overflow: hidden;
    justify-content: flex-start;
  }

  .titlebar .win svg{
    flex: none;
  }

  /* account and order entry */
  .account{
    flex: none;
    display: flex;
    height: 44px;
    border-bottom: 1px solid #93a5ae;
  }

  .stats{
    flex: 1;
    display: grid;
    grid-template-columns: 282fr 278fr 316fr 326fr;
    align-items: center;
    padding-left: 221px;
  }

  .stats span{
    display: flex;
    align-items: center;
    white-space: pre;
  }

  .green{
    color: #1f8b2c;
  }

  .red{
    color: #a81224;
  }

  .cross{
    width: 11px;
    margin: 0 2px;
    background: #f2f2f2;
    color: #f27878;
    font-style: normal;
    font-weight: bold;
    text-align: center;
  }

  .gears{
    width: 14px;
    height: 12px;
  }

  .order{
    display: flex;
    width: 377px;
    padding: 1px 0 0 3px;
    border-left: 1px solid #93a5ae;
  }

  .side{
    display: flex;
    flex-direction: column;
    gap: 3px;
    padding-top: 2px;
  }

  .side button{
    width: 17px;
    height: 17px;
    border: 1px solid #8a979e;
    border-radius: 2px;
    background: #f3f3f3;
  }

  .side .kb{
    height: 13px;
    border: 0;
  }

  .field{
    display: flex;
    flex-direction: column;
    align-items: center;
    gap: 1px;
    padding: 0 1px;
  }

  .field.sep{
    position: relative;
    padding: 0 2px 0 3px;
    margin-left: 1px;
  }

  .field.sep::before{
    content: "";
    position: absolute;
    left: 0;
    top: 6px;
    height: 30px;
    border-left: 1px solid #a9b2b7;
  }

  .field input{
    width: 44px;
    height: 21px;
    margin-right: 2px;
    padding-right: 2px;
    border: 1px solid #a9b2b7;
    border-radius: 2px;
    text-align: right;
    font-size: 11px;
  }

  .doc{
    width: 27px;
    height: 26px;
    border: 1px solid #98a4aa;
    border-radius: 2px;
    background: #f3f3f3;
  }

  .doc svg{
    width: 22px;
    height: 22px;
  }

  .deal-btn{
    align-items: flex-start;
    width: 80px;
    height: 26px;
    padding-top: 3px;
    border-radius: 2px;
    color: #fff;
    font-size: 20px;
    line-height: 20px;
    white-space: nowrap;
  }

  .deal-btn sup{
    font-size: 10px;
    line-height: 12px;
    padding-left: 1px;
  }

  .sell{
    background: #e54a50;
  }

  .buy{
    margin-left: 1px;
    background: #28b42c;
  }

  .auto{
    display: flex;
    flex-direction: column;
    gap: 1px;
    margin-left: 2px;
    padding: 0 0 0 8px;
    border-left: 1px solid #c3cacd;
  }

  .auto div, .auto label{
    display: flex;
    align-items: center;
    gap: 4px;
  }

  .auto [type="checkbox"], .legend [type="checkbox"]{
    appearance: none;
    width: 11px;
    height: 11px;
    border: 1px solid #8f9ba1;
    border-radius: 2px;
    background: #fff;
  }

  .auto [type="text"]{
    width: 17px;
    height: 20px;
    border: 1px solid #a3adb2;
    border-radius: 2px;
    text-align: center;
    color: #a0a0a0;
  }

  .auto label{
    gap: 3px;
  }

  /* chart */
  .chart{
    flex: 1;
    display: flex;
    min-height: 0;
    border-left: 1px solid #8a989f;
  }

  .plot{
    position: relative;
    flex: 1;
    overflow: hidden;
    border-right: 1px solid #7f939b;
  }

  .drawing{
    display: block;
    width: 100%;
    height: 100%;
  }

  .drawing :is(path, rect, ellipse){
    vector-effect: non-scaling-stroke;
  }

  .zone{
    fill: #fddcee;
  }

  .frame{
    fill: none;
    stroke: #111;
  }

  .halo{
    fill: #f98e4a;
    fill-opacity: .18;
    stroke: #efa06f;
  }

  .up path{
    stroke: #2f7596;
  }

  .up rect{
    fill: #159bd0;
    stroke: #0c6690;
  }

  .down path{
    stroke: #b84c4f;
  }

  .down rect{
    fill: #fa6d6f;
    stroke: #c23c40;
  }

  .dash-red{
    stroke: #df1818;
    stroke-width: 2;
    stroke-dasharray: 19.5 8.7;
  }

  .dash-red.dark{
    stroke: #c01a1e;
  }

  .dash-blue{
    stroke: #3b34b8;
    stroke-dasharray: 11 11.45;
  }

  .dash-green{
    stroke: #5fb865;
    stroke-dasharray: 18.5 7.75;
  }

  .open-line{
    stroke: #4dbbf4;
    stroke-width: 2;
  }

  .close-line{
    stroke: #7a0fa9;
    stroke-width: 2;
  }

  .level{
    position: absolute;
    margin-top: -6px;
    white-space: nowrap;
  }

  .level.end{
    right: 3px;
  }

  .legend{
    position: absolute;
    top: 1px;
    left: 0;
    display: flex;
    height: 16px;
    background: #c3d6df;
    border-bottom: 1px solid #7f939b;
  }

  .legend button{
    width: 19px;
    border-right: 1px solid #7f939b;
  }

  .legend button svg{
    width: 12px;
    height: 12px;
  }

  .item{
    display: flex;
    align-items: center;
    gap: 2px;
    padding: 0 3px;
    border-right: 1px solid #7f939b;
    white-space: nowrap;
  }

  .item i, .legend [type="checkbox"]{
    width: 10px;
    height: 10px;
  }

  .legend [type="checkbox"]{
    border-color: #8496a0;
    border-radius: 0;
    background: #d4e1e7;
  }

  .duo{
    background: linear-gradient(90deg, #159bd0 50%, #fa6d6f 50%);
  }

  .black{
    background: #000;
  }

  .range{
    position: absolute;
    top: 17px;
    left: 0;
    padding: 1px 3px 1px 2px;
    border: 1px solid #9aa7ad;
    border-top: 0;
    border-left: 0;
    background: #fff;
    line-height: 13px;
  }

  .source{
    position: absolute;
    left: 1px;
    bottom: 0;
    line-height: 11px;
  }

  .prices{
    position: relative;
    width: 64px;
    border-right: 2px solid #a5b1b7;
  }

  .prices span{
    position: absolute;
    left: 0;
    display: flex;
    align-items: center;
    gap: 3px;
    margin-top: -6px;
    white-space: nowrap;
  }

  .prices span::before{
    content: "";
    width: 3px;
    border-top: 1px solid #7f939b;
  }

  .prices .bold{
    font-weight: bold;
    font-size: 11px;
  }

  .times{
    flex: none;
    height: 17px;
    padding-right: 64px;
    border-left: 1px solid #8a989f;
  }

  .times-inner{
    position: relative;
    height: 17px;
    border-top: 1px solid #7f939b;
    border-right: 1px solid #7f939b;
  }

  .times span{
    position: absolute;
    top: 0;
    padding-top: 4px;
    transform: translateX(-50%);
  }

  .times span::before{
    content: "";
    position: absolute;
    left: 50%;
    top: 0;
    height: 3px;
    border-left: 1px solid #7f939b;
  }

  .times .bold{
    font-weight: bold;
    font-size: 11px;
  }

  .more{
    position: absolute;
    right: 0;
    top: 0;
    width: 17px;
    height: 16px;
    border-left: 1px solid #a5b1b7;
    background: #f2f2f2;
    font-size: 14px;
  }

  /* bottom tools */
  .bottombar{
    flex: none;
    display: flex;
    height: 21px;
    overflow: hidden;
    background: #9bb9c6;
    border-top: 1px solid #7f939b;
  }

  .b-draw{
    width: 30px;
    border-right: 1px solid #7f98a3;
  }

  .b-arrow{
    width: 14px;
    padding-top: 4px;
    font-size: 7px;
  }

  .b-chart{
    width: 27px;
    background: #fff;
    border-right: 1px solid #9bb9c6;
  }

  .white{
    width: 15px;
    background: #fff;
  }

  .share{
    gap: 4px;
    width: 62px;
    padding-top: 2px;
    background: #2794dc;
    color: #fff;
  }

  .share svg{
    width: 15px;
    height: 15px;
  }

  .b-tool{
    width: 23px;
    padding-top: 2px;
  }

  .b-fold{
    width: 18px;
    padding-top: 2px;
    font-size: 14px;
  }

  .b-scroll{
    width: 14px;
    margin-top: 4px;
    border: 1px solid #84a0ab;
    background: #b3cfdb;
    font-size: 7px;
  }

  .track{
    flex: 1;
    display: grid;
    grid-template-columns: 597fr 651fr 144fr;
    margin-top: 4px;
    border-top: 1px solid #84a0ab;
  }

  .thumb{
    grid-column: 2;
    border: 1px solid #84a0ab;
    border-top: 0;
    border-bottom: 0;
    background: linear-gradient(#bad6e1, #a5c4d1);
  }

  .zooms{
    display: flex;
    gap: 4px;
    padding: 2px 1px 0 3px;
  }

  .zooms button{
    width: 21px;
  }

  /* taskbar */
  .taskbar{
    flex: none;
    display: flex;
    height: 37px;
    background: #101010;
  }

  .taskbar button{
    width: 46px;
    padding-right: 3px;
    border-bottom: 2px solid transparent;
  }

  .taskbar button svg{
    width: 22px;
    height: 22px;
  }

  .taskbar .open{
    border-image: linear-gradient(90deg, transparent 3px, #bfb5b5 3px 40px, transparent 40px) 2;
  }

  .taskbar .current{
    background: #343434;
    border-bottom-color: #bfb5b5;
  }

  .clock{
    display: flex;
    flex-direction: column;
    align-items: center;
    justify-content: space-around;
    margin-left: auto;
    padding: 1px 6px 2px 0;
    color: #f2f2f2;
    font-family: "Open Sans", sans-serif;
  }
</style>
